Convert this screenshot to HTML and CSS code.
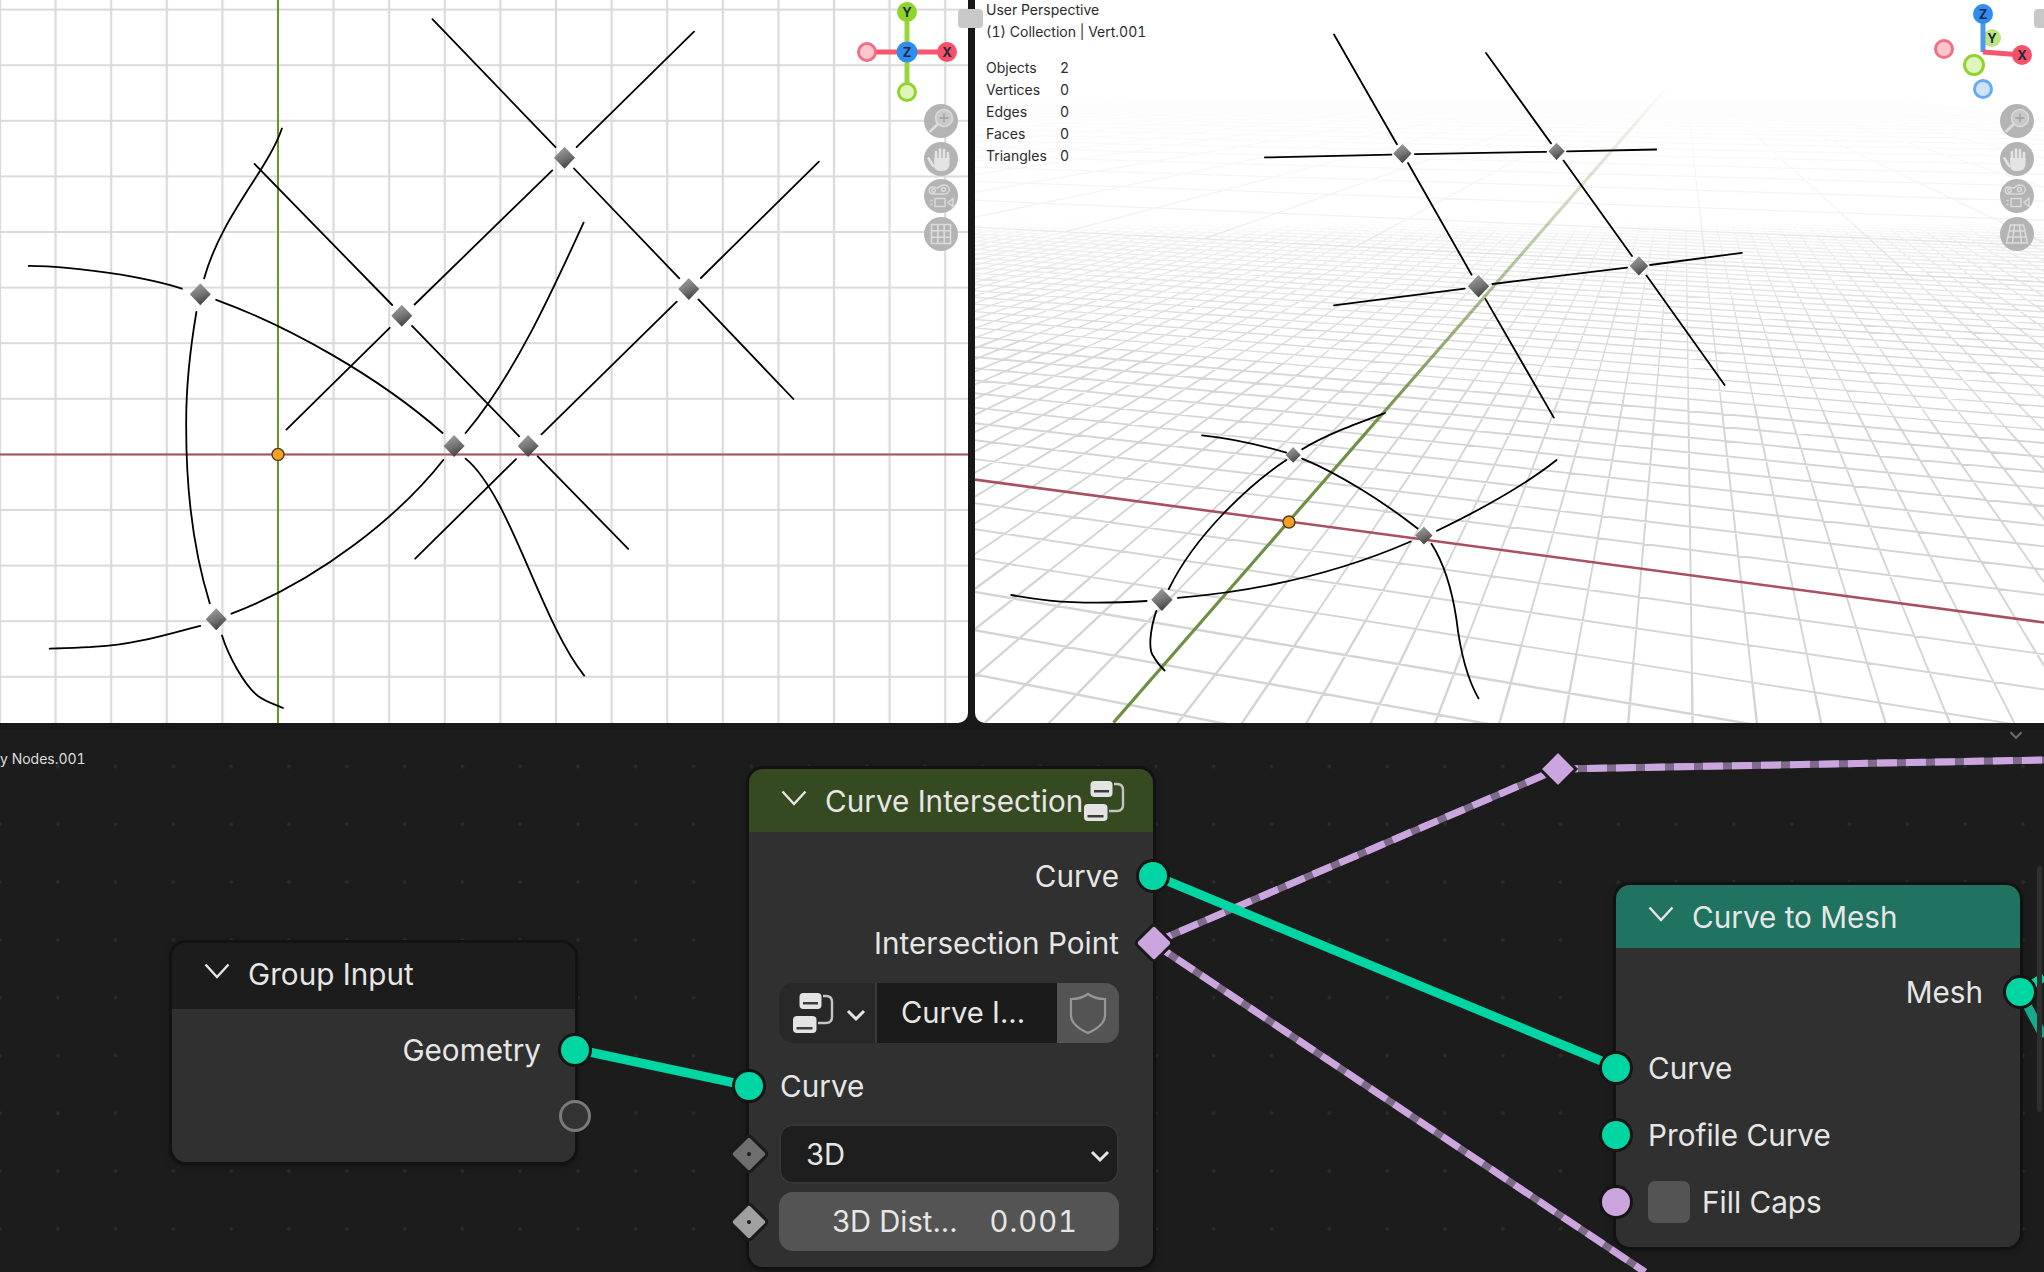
FILE: index.html
```html
<!DOCTYPE html>
<html lang="en">
<head>
    <meta charset="UTF-8">
    <title>Curve Intersection - Geometry Nodes</title>
    <link rel="stylesheet" href="styles.css">
</head>
<body>
    <!-- shared shapes -->
    <svg class="defs" width="0" height="0">
        <defs>
            <linearGradient id="vertFill" x1="0.2" y1="0" x2="0.6" y2="1">
                <stop offset="0" stop-color="#a2a2a2"/>
                <stop offset="0.55" stop-color="#737373"/>
                <stop offset="1" stop-color="#3e3e3e"/>
            </linearGradient>
            <polygon id="vert" points="0,-11 10.500,0 0,11 -10.500,0" fill="url(#vertFill)"/>
            <g id="origin">
                <circle r="6" fill="#f5a024" stroke="#4a3a20" stroke-width="1.400"/>
            </g>
            <symbol id="ico-zoom" viewBox="0 0 34 34">
                <circle cx="20" cy="14" r="8.500" fill="#c9c9c9" stroke="#dcdcdc" stroke-width="1.500"/>
                <path d="M20 9.500v9M15.500 14h9" stroke="#9e9e9e" stroke-width="1.300"/>
                <path d="M13.500 20.500L6.500 27" stroke="#dcdcdc" stroke-width="3" stroke-linecap="round"/>
            </symbol>
            <symbol id="ico-hand" viewBox="0 0 34 34">
                <path d="M9.500 24c-2-2-3-5-5-7.500M12 17V10M16 16V7.500M20 16V8M24 18V11" fill="none" stroke="#e4e4e4" stroke-width="2.600" stroke-linecap="round"/>
                <path d="M10 16h15.500v6c0 4-3 7-7 7h-3c-2 0-4-1-5-3z" fill="#e4e4e4"/>
            </symbol>
            <symbol id="ico-cam" viewBox="0 0 34 34">
                <g fill="none" stroke="#dcdcdc" stroke-width="1.400">
                    <path d="M9 15c-5 0-5-7 0-7 2 0 3 1 4 1 2 0 3-3 7-3 7 0 7 9 0 9z"/>
                    <circle cx="9.500" cy="11.500" r="1.800"/>
                    <circle cx="19.500" cy="10.500" r="2"/>
                    <rect x="11" y="19.500" width="10" height="8"/>
                    <path d="M29 19.500v8l-5-4zM6.500 21.500h2M6.500 25.500h2"/>
                </g>
            </symbol>
            <symbol id="ico-grid" viewBox="0 0 34 34">
                <path d="M7.500 7.500h19v19h-19zM7.500 13.800h19M7.500 20.200h19M13.800 7.500v19M20.200 7.500v19" fill="none" stroke="#dcdcdc" stroke-width="1.600"/>
            </symbol>
            <symbol id="ico-persp" viewBox="0 0 34 34">
                <path d="M10.500 8h13l4 18h-21zM9 14h16M7.500 20h19M14.500 8l-2 18M19.500 8l2 18" fill="none" stroke="#dcdcdc" stroke-width="1.500"/>
            </symbol>
            <symbol id="ico-group" viewBox="0 0 41 40">
                <rect x="6.500" y="0" width="22" height="16" rx="4" fill="#e4e4e4"/>
                <rect x="10" y="9" width="15" height="2.500" fill="#3c3c3c"/>
                <rect x="0" y="23" width="23.500" height="17" rx="4" fill="#e4e4e4"/>
                <rect x="3.500" y="34" width="16" height="2.500" fill="#3c3c3c"/>
                <path d="M30 3h3c4 0 6 2 6 6v15c0 4-2 6-6 6h-8" fill="none" stroke="#c4c4c4" stroke-width="2.400"/>
            </symbol>
            <symbol id="ico-shield" viewBox="0 0 40 42">
                <path d="M20 2c4 3 10 5 17 5v16c0 8-8 14-17 18C11 37 3 31 3 23V7c7 0 13-2 17-5z" fill="none" stroke="#979797" stroke-width="2.200"/>
            </symbol>
            <symbol id="ico-chev" viewBox="0 0 26 16">
                <path d="M1.500 1.500L13 14 24.500 1.500" fill="none" stroke="currentColor" stroke-width="2.400"/>
            </symbol>
            <symbol id="ico-chev-sm" viewBox="0 0 20 14">
                <path d="M2 3l8 8 8-8" fill="none" stroke="currentColor" stroke-width="3"/>
            </symbol>
        </defs>
    </svg>

    <div class="screen">
        <div class="views">
            <!-- top view -->
            <section class="view view-top">
                <svg class="scene" viewBox="0 0 968 723">
                    <defs>
                        <pattern id="topGrid" x="0" y="0" width="55.6" height="55.6" patternUnits="userSpaceOnUse" patternTransform="translate(27.800 -18.200)">
                            <path d="M27.800 0V55.600M0 27.800H55.600" fill="none" stroke="#dadada" stroke-width="2.200"/>
                        </pattern>
                    </defs>
                    <rect width="968" height="723" fill="url(#topGrid)"/>
                    <path class="axis-x" d="M0 454.400H968"/>
                    <path class="axis-y" d="M278 0V723"/>
                    <g class="curves">
                        <path d="M432.400 19.100L555.500 147.100M574 168.500L679.300 278.400M698.400 299.400L793.400 399"/>
                        <path d="M694 31.700L576.600 147.100M552.300 170.400L414.600 304.500M389.700 327.800L286.400 429.700"/>
                        <path d="M254.500 163.900L392.200 305M412 325.900L519.200 436.300M537.700 456.300L628.200 548.900"/>
                        <path d="M818.900 161.600L700.900 278M676.700 301.700L541.500 434.400M516 459.100L415.200 558.700"/>
                        <path d="M281.900 128.500C268 170 222 215 204.100 278.400M196.400 312C190 350 186 390 186.200 423.700C186 470 190 540 209.800 603.400M222 635.500C228 655 244 685 258 696C266 702 274 704 283 708"/>
                        <path d="M28.700 265.900C60 266 90 270 121 274.700C140 278 165 283 181.800 288.700M216.200 299.800C288 326 378 376 442.600 433M465.600 458.600C510 495 540 620 584.200 675.600"/>
                        <path d="M583.600 222.600C555 285 515 375 465.600 433M443.300 460C400 515 320 580 231.500 613.700M200.300 625.800C175 632 135 645 95.700 646.700C80 648 65 648 49.700 648.600"/>
                    </g>
                    <use href="#vert" x="564.500" y="157.800"/>
                    <use href="#vert" x="688.800" y="289.100"/>
                    <use href="#vert" x="401.800" y="315.700"/>
                    <use href="#vert" x="528.100" y="446"/>
                    <use href="#vert" x="454.100" y="446"/>
                    <use href="#vert" x="200.300" y="294.300"/>
                    <use href="#vert" x="216.200" y="619.200"/>
                    <use href="#origin" x="278" y="454.400"/>
                    <g class="gizmo">
                        <path class="giz-x" d="M867 52H947"/>
                        <path class="giz-y" d="M907 12V92"/>
                        <circle class="ball-neg-x" cx="867" cy="52" r="8.500"/>
                        <circle class="ball-neg-y" cx="907" cy="92" r="8.500"/>
                        <circle class="ball-x" cx="947" cy="52" r="10"/>
                        <circle class="ball-y" cx="907" cy="12" r="10"/>
                        <circle class="ball-z" cx="907" cy="52" r="10.500"/>
                        <text x="947" y="57">X</text>
                        <text x="907" y="17">Y</text>
                        <text x="907" y="57">Z</text>
                    </g>
                </svg>
                <div class="nav">
                    <div class="nav-btn"><svg><use href="#ico-zoom"/></svg></div>
                    <div class="nav-btn"><svg><use href="#ico-hand"/></svg></div>
                    <div class="nav-btn"><svg><use href="#ico-cam"/></svg></div>
                    <div class="nav-btn"><svg><use href="#ico-grid"/></svg></div>
                </div>
            </section>

            <!-- perspective view -->
            <section class="view view-persp">
                <svg class="scene" viewBox="975 0 1069 723">
                    <defs>
                        <linearGradient id="fineFade" gradientUnits="userSpaceOnUse" x1="0" y1="222" x2="0" y2="723">
                            <stop offset="0" stop-color="#d4d4d4" stop-opacity="0"/>
                            <stop offset="0.03" stop-color="#d4d4d4" stop-opacity="0.32"/>
                            <stop offset="0.22" stop-color="#d4d4d4" stop-opacity="0.85"/>
                            <stop offset="0.45" stop-color="#d4d4d4" stop-opacity="1"/>
                        </linearGradient>
                        <linearGradient id="coarseFade" gradientUnits="userSpaceOnUse" x1="0" y1="90" x2="0" y2="723">
                            <stop offset="0" stop-color="#d4d4d4" stop-opacity="0"/>
                            <stop offset="0.22" stop-color="#d4d4d4" stop-opacity="0.35"/>
                            <stop offset="0.5" stop-color="#d4d4d4" stop-opacity="0.8"/>
                            <stop offset="1" stop-color="#d4d4d4" stop-opacity="1"/>
                        </linearGradient>
                        <linearGradient id="greenFade" gradientUnits="userSpaceOnUse" x1="0" y1="85" x2="0" y2="723">
                            <stop offset="0" stop-color="#6f8f45" stop-opacity="0"/>
                            <stop offset="0.25" stop-color="#6f8f45" stop-opacity="0.45"/>
                            <stop offset="0.55" stop-color="#6f8f45" stop-opacity="1"/>
                        </linearGradient>
                    </defs>
                    <g id="perspective-grid"></g>
                    <path class="persp-x" d="M975 479.600L2044 622.500"/>
                    <path class="persp-y" d="M1113.500 722.600L1672 81.500"/>
                    <g class="curves">
                        <path d="M1334 34.500L1396.900 144.300M1408 163L1471.600 274.700M1485.400 298.900L1553.800 417.600"/>
                        <path d="M1486 53L1551 143.400M1563.500 160.600L1632 256M1646.500 275.600L1724.600 385"/>
                        <path d="M1264.900 157.400L1391.400 154.600M1414.900 154.100L1546.200 151.800M1567 151.300L1656.200 149.500"/>
                        <path d="M1334 305.400L1464.700 288.700M1492.300 284L1627 267.700M1650 265L1741.900 252.800"/>
                        <path d="M1202 435.300C1230 438 1260 445 1286.300 452.600M1302.200 458.600C1340 474 1385 503 1417.600 528.500M1431.500 543.800C1445 565 1452 590 1456.400 619C1460 650 1468 680 1478.500 698.400"/>
                        <path d="M1385 413C1358 423 1325 435 1302.200 449.300M1286.300 460C1250 484 1195 535 1168.800 589M1156.300 610.900C1150 630 1148 650 1153.600 656.500C1156 661 1160 666 1164.600 670.500"/>
                        <path d="M1556.600 460C1525 485 1480 510 1437 530.800M1410.700 541.500C1350 568 1270 590 1177.800 597.800M1146.700 601C1115 603 1075 603 1049.900 600.600C1035 599 1022 597 1011.200 595"/>
                    </g>
                    <use href="#vert" transform="translate(1402.400 153.600) scale(0.88)"/>
                    <use href="#vert" transform="translate(1556.600 151.300) scale(0.78)"/>
                    <use href="#vert" transform="translate(1478.500 286.300) scale(1.02)"/>
                    <use href="#vert" transform="translate(1638.900 265.900) scale(0.88)"/>
                    <use href="#vert" transform="translate(1293.200 454.900) scale(0.72)"/>
                    <use href="#vert" transform="translate(1423.900 535.400) scale(0.82)"/>
                    <use href="#vert" transform="translate(1161.900 599.700) scale(1.02)"/>
                    <use href="#origin" x="1289" y="522"/>
                    <g class="gizmo">
                        <circle class="ball-neg-x" cx="1944" cy="49" r="8.500"/>
                        <circle class="ball-neg-z" cx="1983" cy="89" r="8.500"/>
                        <circle class="ball-y-far" cx="1992" cy="38" r="9"/>
                        <text x="1992" y="43">Y</text>
                        <path class="giz-z" d="M1983 52V14"/>
                        <path class="giz-x" d="M1983 52L2022 55"/>
                        <circle class="ball-neg-y" cx="1974" cy="65" r="9.500"/>
                        <circle class="ball-x" cx="2022" cy="55" r="10"/>
                        <circle class="ball-z" cx="1983" cy="14" r="10"/>
                        <text x="2022" y="60">X</text>
                        <text x="1983" y="19">Z</text>
                    </g>
                </svg>
                <div class="overlay-text">
                    <p>User Perspective</p>
                    <p>(1) Collection | Vert.001</p>
                    <dl class="stats">
                        <dt>Objects</dt><dd>2</dd>
                        <dt>Vertices</dt><dd>0</dd>
                        <dt>Edges</dt><dd>0</dd>
                        <dt>Faces</dt><dd>0</dd>
                        <dt>Triangles</dt><dd>0</dd>
                    </dl>
                </div>
                <div class="nav">
                    <div class="nav-btn"><svg><use href="#ico-zoom"/></svg></div>
                    <div class="nav-btn"><svg><use href="#ico-hand"/></svg></div>
                    <div class="nav-btn"><svg><use href="#ico-cam"/></svg></div>
                    <div class="nav-btn"><svg><use href="#ico-persp"/></svg></div>
                </div>
                <div class="handle handle-right"></div>
            </section>
            <div class="handle handle-mid"></div>
        </div>

        <!-- node editor -->
        <section class="editor">
            <svg class="wires" viewBox="0 730 2044 542">
                <g class="wire-field">
                    <path class="base" d="M1153 943L1558 769"/>
                    <path class="dash" d="M1153 943L1558 769"/>
                    <path class="base" d="M1558 769L2044 760"/>
                    <path class="dash" d="M1558 769L2044 760"/>
                    <path class="base" d="M1153 943L1645 1272"/>
                    <path class="dash" d="M1153 943L1645 1272"/>
                </g>
                <g class="wire-geo">
                    <path d="M575 1049L749 1086"/>
                    <path d="M1153 875L1616 1067"/>
                    <path d="M2020 992L2044 977"/>
                    <path class="wire-dim" d="M2020 992L2044 1037"/>
                </g>
                <polygon class="reroute" points="1558,751 1576,769 1558,787 1540,769"/>
            </svg>

            <div class="editor-label">y Nodes.001</div>
            <svg class="editor-chev"><use href="#ico-chev-sm"/></svg>
            <div class="editor-scroll"></div>

            <div class="node node-group-input">
                <div class="node-head head-dark">
                    <svg class="head-chev"><use href="#ico-chev"/></svg>
                    <span>Group Input</span>
                </div>
                <div class="node-body">
                    <div class="row row-out">Geometry<i class="sock sock-right teal"></i></div>
                    <div class="row row-out"><i class="sock sock-right sock-empty"></i></div>
                </div>
            </div>

            <div class="node node-intersection">
                <div class="node-head head-green">
                    <svg class="head-chev"><use href="#ico-chev"/></svg>
                    <span>Curve Intersection</span>
                    <svg class="head-group"><use href="#ico-group"/></svg>
                </div>
                <div class="node-body">
                    <div class="row row-out">Curve<i class="sock sock-right teal"></i></div>
                    <div class="row row-out row-point">Intersection Point<i class="dia dia-right lilac"></i></div>
                    <div class="id-field">
                        <div class="id-browse">
                            <svg class="id-icon"><use href="#ico-group"/></svg>
                            <svg class="small-chev"><use href="#ico-chev-sm"/></svg>
                        </div>
                        <div class="id-name">Curve I...</div>
                        <div class="id-shield"><svg><use href="#ico-shield"/></svg></div>
                    </div>
                    <div class="row row-in">Curve<i class="sock sock-left teal"></i></div>
                    <div class="field field-select">
                        <i class="dia dia-left gray"></i>
                        <span>3D</span>
                        <svg class="small-chev"><use href="#ico-chev-sm"/></svg>
                    </div>
                    <div class="field field-number">
                        <i class="dia dia-left light"></i>
                        <span>3D Dist...</span>
                        <span class="num">0.001</span>
                    </div>
                </div>
            </div>

            <div class="node node-mesh">
                <div class="node-head head-teal">
                    <svg class="head-chev"><use href="#ico-chev"/></svg>
                    <span>Curve to Mesh</span>
                </div>
                <div class="node-body">
                    <div class="row row-out">Mesh<i class="sock sock-right teal"></i></div>
                    <div class="row row-in">Curve<i class="sock sock-left teal"></i></div>
                    <div class="row row-in">Profile Curve<i class="sock sock-left teal"></i></div>
                    <div class="row row-in">
                        <i class="sock sock-left lilac"></i>
                        <span class="checkbox"></span>
                        Fill Caps
                    </div>
                </div>
            </div>
        </section>
    </div>
    <script src="grid.js"></script>
</body>
</html>
```

FILE: styles.css
```css
* { box-sizing: border-box; }
html, body { margin: 0; height: 100%; overflow: hidden; background: #181818; }
body { font-family: Inter, "Noto Sans", sans-serif; }
.defs { position: absolute; }

.screen { width: 2044px; height: 1272px; display: flex; flex-direction: column; gap: 7px; }
.views { position: relative; height: 723px; display: flex; gap: 7px; }
.view { position: relative; background: #fff; overflow: hidden; }
.view-top { width: 968px; border-bottom-right-radius: 10px; }
.view-persp { flex: 1; border-bottom-left-radius: 10px; }
.scene { display: block; width: 100%; height: 723px; }

.axis-x { stroke: #a5505f; stroke-width: 2; fill: none; }
.axis-y { stroke: #6a9528; stroke-width: 2; fill: none; }
.persp-x { stroke: #a8505f; stroke-width: 2.600; fill: none; }
.persp-y { stroke: url(#greenFade); stroke-width: 3.200; fill: none; }
.curves path { fill: none; stroke: #000; stroke-width: 1.800; stroke-linecap: round; }

.gizmo text { font: 700 13px Inter, sans-serif; text-anchor: middle; fill: #1d2a3a; }
.giz-x { stroke: #f8566f; stroke-width: 5; fill: none; }
.giz-y { stroke: #96d63a; stroke-width: 5; fill: none; }
.giz-z { stroke: #4c9af0; stroke-width: 5; fill: none; }
.ball-x { fill: #f8506a; }
.ball-y { fill: #8fd42b; }
.ball-z { fill: #2d8df0; }
.ball-y-far { fill: #bde57f; }
.ball-neg-x { fill: #fcc6ce; stroke: #ef6f84; stroke-width: 3; }
.ball-neg-y { fill: #dff5bc; stroke: #8fd42b; stroke-width: 3; }
.ball-neg-z { fill: #cfe4fc; stroke: #68a9f3; stroke-width: 3; }

.nav { position: absolute; top: 104px; display: flex; flex-direction: column; gap: 3.500px; right: 10px; }
.nav-btn { width: 34px; height: 34px; border-radius: 50%; background: #b4b4b4; }
.nav-btn svg { display: block; width: 34px; height: 34px; }

.handle { position: absolute; height: 19px; background: #c8c8c8; border-radius: 4px; }
.handle-mid { left: 958px; top: 9px; width: 25px; }
.handle-right { right: -5px; top: 9px; width: 15px; }

.overlay-text { position: absolute; left: 11px; top: -1px; font-size: 14px; line-height: 22px; color: #2b2b2b; font-variant-numeric: tabular-nums; }
.overlay-text p { margin: 0; }
.stats { display: grid; grid-template-columns: 74px auto; margin: 14px 0 0; }
.stats dd { margin: 0; }

/* node editor */
.editor {
    position: relative; flex: 1; overflow: hidden; background-color: #1c1c1c;
    background-image: radial-gradient(circle, #2c2c2c 1.500px, transparent 2px);
    background-size: 57.800px 57.800px;
    background-position: -28.900px 7.600px;
    color: #e6e6e6;
    font-size: 29.700px;
}
.wires { position: absolute; inset: 0; width: 2044px; height: 542px; }
.wire-geo path { stroke: #00d6a3; stroke-width: 9; fill: none; }
.wire-geo .wire-dim { stroke: #16a98a; }
.wire-field path { fill: none; stroke-width: 7; }
.wire-field .base { stroke: #7e6a8b; }
.wire-field .dash { stroke: #cba6de; stroke-dasharray: 20 9; }
.reroute { fill: #cba6de; stroke: #1c1c1c; stroke-width: 3; }

.editor-label { position: absolute; left: 0; top: 20px; font-size: 14px; line-height: 17px; color: #dedede; font-variant-numeric: tabular-nums; }
.editor-chev { position: absolute; left: 2009px; top: 0; width: 14px; height: 10px; color: #6b6b6b; }
.editor-scroll { position: absolute; left: 2037px; top: 136px; width: 5px; height: 246px; border-radius: 3px; background: #2e2e2e; }

.node { position: absolute; border-radius: 14px; box-shadow: 0 0 0 3px #121212, 0 3px 10px rgba(0, 0, 0, 0.4); }
.node-group-input { left: 172px; top: 213px; width: 403px; }
.node-intersection { left: 749px; top: 39px; width: 404px; }
.node-mesh { left: 1616px; top: 155px; width: 404px; }

.node-head { display: flex; align-items: center; height: 63px; border-radius: 14px 14px 0 0; padding-left: 32px; gap: 18px; }
.node-group-input .node-head { height: 66px; padding-bottom: 5px; }
.head-dark { background: #1c1c1c; }
.head-green { background: #354a20; }
.head-teal { background: #1f7360; }
.head-chev { width: 26px; height: 16px; margin-top: -5px; flex: none; }
.head-group { width: 41px; height: 40px; flex: none; margin-left: -17px; }

.node-body { background: #303030; border-radius: 0 0 14px 14px; display: flex; flex-direction: column; padding: 11px 34px 16px 30px; }
.node-group-input .node-body { padding: 14px 34px 19px 30px; gap: 12px; }
.node-mesh .node-body { padding: 14px 37px 15px 32px; gap: 7px; }

.row { position: relative; display: flex; align-items: center; height: 60px; }
.row-out { justify-content: flex-end; }
.node-group-input .row { height: 54px; }
.node-intersection .row-out { height: 66px; }
.node-intersection .row-point { height: 68px; }
.node-intersection .row-in { margin-top: 13px; margin-bottom: 8px; padding-left: 1px; }
.node-mesh .row:nth-child(2) { margin-top: 9px; }

/* sockets sit on the node edge */
.sock { position: absolute; top: 50%; width: 28px; height: 28px; margin-top: -14px; border-radius: 50%; box-shadow: 0 0 0 3px #141414; }
.sock-right { right: -48px; }
.sock-left { left: -46px; }
.node-intersection .sock-left { left: -44px; }
.node-mesh .sock-right { right: -51px; }
.teal { background: #00d6a3; }
.lilac { background: #cba6de; }
.sock-empty { width: 32px; height: 32px; margin-top: -16px; right: -50px; background: #333; box-shadow: none; border: 3px solid #7a7a7a; }

.dia { position: absolute; top: 50%; width: 24px; height: 24px; margin-top: -12px; transform: rotate(45deg); box-shadow: 0 0 0 3px #1a1a1a; border-radius: 2px; }
.dia-right { right: -47px; }
.dia-left { left: -42px; }
.dia.gray::after, .dia.light::after { content: ""; position: absolute; left: 10px; top: 10px; width: 4px; height: 4px; border-radius: 50%; background: #1e1e1e; }
.gray { background: #6e6e6e; }
.light { background: #a0a0a0; }

.id-field { display: flex; height: 60px; margin-top: 6px; border-radius: 14px; overflow: hidden; box-shadow: inset 0 0 0 2px #3a3a3a; font-size: 29.200px; }
.id-browse { width: 98px; display: flex; align-items: center; gap: 12px; padding-left: 14px; background: #282828; border-right: 2px solid #3a3a3a; }
.id-icon { width: 41px; height: 40px; flex: none; }
.id-name { width: 180px; background: #1b1b1b; padding-left: 24px; line-height: 60px; }
.id-shield { flex: 1; background: #545454; display: flex; align-items: center; justify-content: center; }
.id-shield svg { width: 40px; height: 42px; }
.small-chev { width: 20px; height: 14px; flex: none; color: #e6e6e6; margin-top: 4px; }

.field { position: relative; height: 60px; display: flex; align-items: center; border-radius: 14px; font-size: 29.200px; }
.field-select { justify-content: space-between; padding: 0 9px 0 27px; background: #1e1e1e; box-shadow: inset 0 0 0 2px #363636; }
.field-number { height: 59px; margin-top: 8px; padding: 0 41px 0 53px; justify-content: space-between; background: #545454; }
.num { font-variant-numeric: tabular-nums; letter-spacing: 1px; }

.checkbox { width: 42px; height: 42px; border-radius: 7px; background: #545454; margin-right: 12px; }
```

FILE: grid.js
```js
// perspective floor grid, projected from the two axis vanishing points
var vx = [-2091, 70], vy = [1684, 70], o = [1289, 522];
var a = -0.0118, b = 0.048;

function project(X, Y) {
    var w = 1 + a * X + b * Y;
    return [(a * X * vx[0] + b * Y * vy[0] + o[0]) / w,
            (a * X * vx[1] + b * Y * vy[1] + o[1]) / w];
}

// clip a grid line to the part in front of the camera
function seg(x0, y0, x1, y1) {
    var w0 = 1 + a * x0 + b * y0, min = 0.08;
    if (w0 < min) {
        var w1 = 1 + a * x1 + b * y1, t = (min - w0) / (w1 - w0);
        x0 += (x1 - x0) * t;
        y0 += (y1 - y0) * t;
    }
    var p = project(x0, y0), q = project(x1, y1);
    return "M" + p[0].toFixed(1) + " " + p[1].toFixed(1) + "L" + q[0].toFixed(1) + " " + q[1].toFixed(1);
}

function addPath(d, stroke, width) {
    var el = document.createElementNS("http://www.w3.org/2000/svg", "path");
    el.setAttribute("d", d);
    el.setAttribute("fill", "none");
    el.setAttribute("stroke", stroke);
    el.setAttribute("stroke-width", width);
    document.getElementById("perspective-grid").appendChild(el);
}

// lines get thinner with distance, so the fine grid is drawn in three bands
var bands = [[-20, -3, 2.4], [-3, 10, 1.9], [10, 60, 1.4]];
bands.forEach(function (band) {
    var d = "";
    for (var x = -400; x <= 84; x++) {
        if (x !== 0) d += seg(x, band[0], x, band[1]);
    }
    for (var y = band[0]; y < band[1]; y++) {
        if (y !== 0) d += seg(84, y, -3000, y);
    }
    addPath(d, "url(#fineFade)", band[2]);
});

var coarse = "";
for (var x = -4000; x <= 80; x += 10) {
    if (x !== 0) coarse += seg(x, 30, x, 3000);
}
for (var y = 30; y <= 1500; y += 10) coarse += seg(84, y, -8000, y);
addPath(coarse, "url(#coarseFade)", 1.3);
```
